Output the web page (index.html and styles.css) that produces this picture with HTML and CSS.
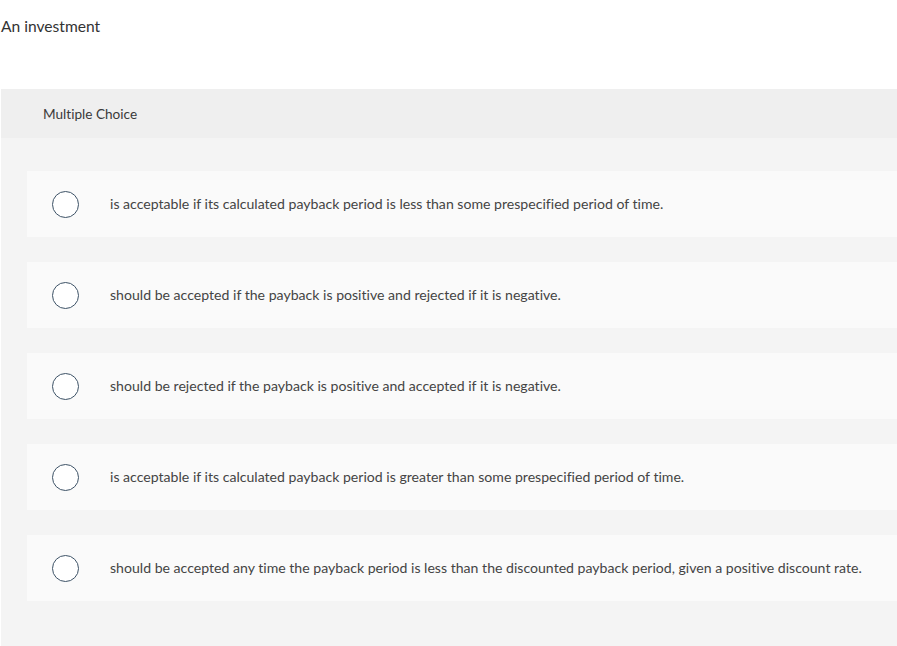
FILE: index.html
```html
<!DOCTYPE html>
<html>
<head>
<meta charset="utf-8">
<link rel="stylesheet" href="styles.css">
</head>
<body>
<div class="question">An investment</div>
<div class="panel">
  <div class="panel-head">Multiple Choice</div>
  <div class="options">
    <div class="option"><span class="radio"></span><span class="label">is acceptable if its calculated payback period is less than some prespecified period of time.</span></div>
    <div class="option"><span class="radio"></span><span class="label">should be accepted if the payback is positive and rejected if it is negative.</span></div>
    <div class="option"><span class="radio"></span><span class="label">should be rejected if the payback is positive and accepted if it is negative.</span></div>
    <div class="option"><span class="radio"></span><span class="label">is acceptable if its calculated payback period is greater than some prespecified period of time.</span></div>
    <div class="option"><span class="radio"></span><span class="label">should be accepted any time the payback period is less than the discounted payback period, given a positive discount rate.</span></div>
  </div>
</div>
</body>
</html>
```
FILE: styles.css
```css
html, body {
  margin: 0;
  padding: 0;
  background: #ffffff;
  font-family: Lato, "Open Sans", "Liberation Sans", sans-serif;
  font-variant-ligatures: none;
  color: #333333;
  overflow: hidden;
}
.question {
  font-size: 15.6px;
  line-height: 20px;
  padding: 16px 0 0 1px;
  height: 89px;
  box-sizing: border-box;
  color: #333;
}
.panel {
  margin-left: 1px;
  background: #f4f4f4;
  height: 557px;
}
.panel-head {
  background: #efefef;
  height: 49px;
  display: flex;
  align-items: center;
  padding-left: 42px;
  font-size: 13.6px;
  color: #3a3a3a;
}
.options {
  display: flex;
  flex-direction: column;
  gap: 25px;
  padding: 33px 0 0 26px;
}
.option {
  background: #fafafa;
  height: 66px;
  display: flex;
  align-items: center;
  padding-left: 25px;
}
.radio {
  width: 25px;
  height: 25px;
  border: 1.5px solid #3d5266;
  border-radius: 50%;
  flex: none;
  background: #fff;
}
.label {
  margin-left: 31px;
  margin-bottom: 2px;
  font-size: 14.1px;
  color: #444;
}
```
